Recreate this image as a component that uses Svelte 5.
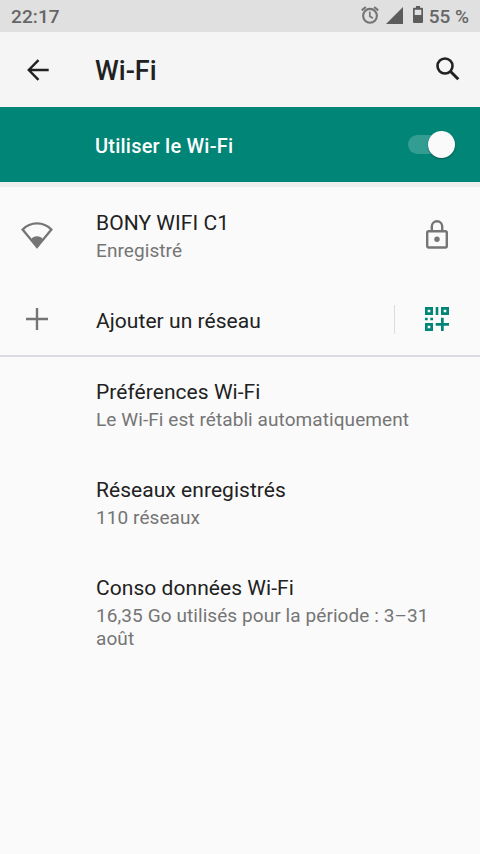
<script lang="ts">
  type Preference = { title: string; summary: string }

  const preferences: Preference[] = [
    { title: 'Préférences Wi-Fi', summary: 'Le Wi-Fi est rétabli automatiquement' },
    { title: 'Réseaux enregistrés', summary: '110 réseaux' },
    { title: 'Conso données Wi-Fi', summary: '16,35 Go utilisés pour la période : 3–31 août' },
  ]

  let enabled = $state(true)
</script>

<div class="screen">
  <div class="status">
    <span class="clock">22:17</span>
    <svg class="alarm" width="20" height="20" viewBox="0 0 20 20" fill="none" stroke="currentColor">
      <circle cx="10" cy="10.8" r="6.9" stroke-width="2.1" />
      <path d="M9.8 6.5v4.7l3.1 2" stroke-width="1.7" />
      <path d="M1.8 5.4 5.8 2M18.2 5.4 14.2 2" stroke-width="2.1" />
    </svg>
    <svg class="signal" width="17" height="17" viewBox="0 0 17 17" fill="currentColor">
      <path d="M0 17 17 0v17z" />
    </svg>
    <svg class="battery" width="10" height="17" viewBox="0 0 10 17">
      <path fill="currentColor" fill-rule="evenodd" d="M3 0h4v1.7h2a1 1 0 0 1 1 1V16a1 1 0 0 1-1 1H1a1 1 0 0 1-1-1V2.7a1 1 0 0 1 1-1h2zM1.7 3.7V9h6.6V3.7z" />
    </svg>
    <span class="percent">55 %</span>
  </div>

  <header class="toolbar">
    <button class="icon-btn back" aria-label="Retour">
      <svg width="22" height="22" viewBox="0 0 22 22" fill="none" stroke="currentColor" stroke-width="2.4">
        <path d="M21.7 11H2.2M11.5 1.2 1.8 11l9.7 9.8" />
      </svg>
    </button>
    <h1>Wi-Fi</h1>
    <button class="icon-btn search" aria-label="Rechercher">
      <svg width="24" height="24" viewBox="0 0 24 24" fill="none" stroke="currentColor">
        <circle cx="9" cy="9" r="7.5" stroke-width="2.6" />
        <path d="m14.3 14.3 8 8" stroke-width="3" />
      </svg>
    </button>
  </header>

  <div class="switch-bar">
    <span>Utiliser le Wi-Fi</span>
    <button
      class="switch"
      class:on={enabled}
      role="switch"
      aria-checked={enabled}
      aria-label="Utiliser le Wi-Fi"
      onclick={() => (enabled = !enabled)}
    >
      <span class="thumb"></span>
    </button>
  </div>

  <div class="networks">
    <div class="row network">
      <div class="lead">
        <svg width="32" height="27" viewBox="0 0 32 27">
          <path d="M1.6 7.6C9.5-.6 22.5-.6 30.4 7.6L16 25z" fill="none" stroke="currentColor" stroke-width="2.3" />
          <path d="M10 18C11 13 21 13 22 18L16 26.5z" fill="currentColor" />
        </svg>
      </div>
      <div class="text">
        <div class="title">BONY WIFI C1</div>
        <div class="summary">Enregistré</div>
      </div>
      <svg class="lock" width="22" height="29" viewBox="0 0 22 29" fill="none" stroke="currentColor" stroke-width="2.4">
        <rect x="1.2" y="11.2" width="19.6" height="16.3" rx="1.4" />
        <path d="M5.8 11V6.5a5.2 5.2 0 0 1 10.4 0V11" />
        <circle cx="11" cy="19.2" r="2.7" fill="currentColor" stroke="none" />
      </svg>
    </div>

    <div class="row add">
      <div class="lead">
        <svg width="22" height="22" viewBox="0 0 22 22" stroke="currentColor" stroke-width="2.4">
          <path d="M11 0v22M0 11h22" />
        </svg>
      </div>
      <div class="text">
        <div class="title">Ajouter un réseau</div>
      </div>
      <div class="separator"></div>
      <button class="icon-btn" aria-label="Scanner un code QR">
        <svg class="scan" width="24" height="24" viewBox="0 0 24 24" fill="currentColor" fill-rule="evenodd">
          <path d="M0 0h8v8H0zM2.7 2.7v2.6h2.6V2.7z" />
          <path d="M16 0h8v8h-8zM18.7 2.7v2.6h2.6V2.7z" />
          <path d="M0 16h8v8H0zM2.7 18.7v2.6h2.6v-2.6z" />
          <path d="M10.7 0h2.6v8h-2.6zM0 10.7h2.7v2.6H0zM5.3 10.7H8v2.6H5.3z" />
          <path d="M16 10.7h2.7V16H24v2.7h-5.3V24H16v-5.3h-5.3V16H16z" />
        </svg>
      </button>
    </div>
  </div>

  <div class="preferences">
    {#each preferences as pref}
      <div class="row preference">
        <div class="text">
          <div class="title">{pref.title}</div>
          <div class="summary">{pref.summary}</div>
        </div>
      </div>
    {/each}
  </div>
</div>

<style>
  :global(body) {
    background: #fafafa;
  }

  .screen {
    min-height: 854px;
    background: #fafafa;
    color: #212121;
    font-family: Roboto, 'Liberation Sans', sans-serif;
  }

  svg {
    display: block;
    flex: none;
  }

  button {
    padding: 0;
    border: none;
    background: none;
    color: inherit;
    cursor: pointer;
  }

  .status {
    display: flex;
    align-items: center;
    box-sizing: border-box;
    height: 32px;
    padding: 0 11px;
    background: #e0e0e0;
    color: #5c5c5c;
    font-size: 19px;
    font-weight: 500;
  }

  .clock {
    flex: 1;
    color: #666;
    letter-spacing: 0.1px;
  }

  .alarm {
    margin: 0 6px 2px 0;
    color: #747474;
  }

  .signal {
    margin: 0 10px 2px 0;
  }

  .battery {
    margin: 0 6px 4px 0;
  }

  .percent {
    color: #666;
  }

  .toolbar {
    display: flex;
    align-items: center;
    box-sizing: border-box;
    height: 75px;
    padding: 0 20px 0 27px;
    background: #f5f5f5;
  }

  .back {
    width: 68px;
  }

  .search {
    margin-bottom: 2px;
  }

  h1 {
    flex: 1;
    margin: 2px 0 0;
    font-size: 27px;
    font-weight: 500;
  }

  .switch-bar {
    display: flex;
    align-items: center;
    justify-content: space-between;
    box-sizing: border-box;
    height: 75px;
    padding: 2px 25px 0 95px;
    background: #008577;
    color: #fff;
    font-size: 20px;
    font-weight: 500;
    letter-spacing: 0.22px;
  }

  .switch {
    display: flex;
    align-items: center;
    width: 47px;
    height: 19px;
    margin-bottom: 3px;
    border-radius: 10px;
    background: rgba(255, 255, 255, 0.2);
  }

  .thumb {
    width: 27px;
    height: 27px;
    border-radius: 50%;
    background: #fafafa;
    box-shadow: 0 1px 2px rgba(0, 0, 0, 0.35);
  }

  .on {
    justify-content: flex-end;
  }

  .networks {
    border-top: 5px solid #eeeeee;
    border-bottom: 2px solid #dadce0;
  }

  .row {
    display: flex;
    align-items: center;
    box-sizing: border-box;
  }

  .network {
    height: 98px;
    padding: 0 32px 4px 0;
  }

  .network .text {
    padding-top: 2px;
  }

  .network .lead {
    padding-top: 2px;
  }

  .add {
    height: 70px;
    padding: 0 31px 2px 0;
  }

  .add .text {
    padding-top: 4px;
  }

  .lead {
    display: flex;
    justify-content: center;
    width: 74px;
    margin-right: 22px;
    color: #757575;
  }

  .text {
    flex: 1;
  }

  .title {
    font-size: 21px;
    line-height: 28px;
    letter-spacing: 0.05px;
  }

  .summary {
    margin-top: 2px;
    color: #757575;
    font-size: 19px;
    line-height: 23px;
    letter-spacing: 0.08px;
  }

  .lock {
    color: #757575;
  }

  .separator {
    width: 1px;
    height: 29px;
    margin-right: 30px;
    background: #dadce0;
  }

  .scan {
    color: #008577;
  }

  .preference {
    padding: 21px 32px 24px 96px;
  }
</style>
